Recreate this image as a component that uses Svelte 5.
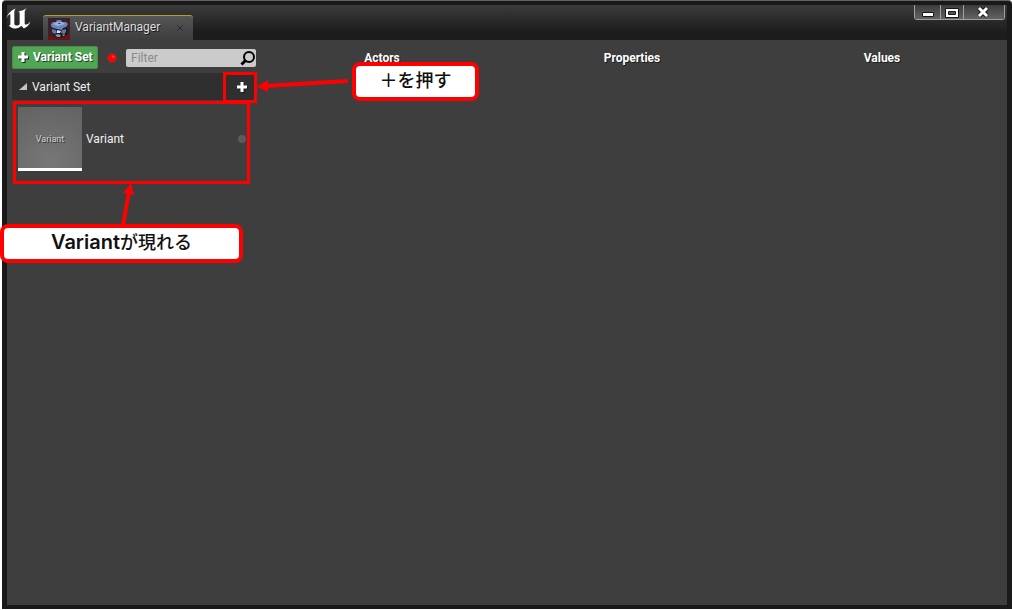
<script>
    let filter = '';
    let expanded = true;

    const columns = ['Actors', 'Properties', 'Values'];
    let variants = ['Variant'];

    function addVariant() {
        variants = [...variants, `Variant ${variants.length}`];
        expanded = true;
    }
</script>

<div class="window">
    <header class="titlebar">
        <svg class="logo" width="24" height="21" viewBox="1 0 22 19" aria-hidden="true">
            <path
                fill="#fff"
                d="M.3 9.500C1.800 4.800 5 1.600 9 .3C7.900 1.500 7.700 2.600 7.700 4V14C7.700 15.400 9.300 16.300 10.500 15.900C11.500 15.600 12.200 15.200 12.600 14.700V4.500C12.600 3.500 12 3.300 11 3.200C13.500 2.800 16.500 1.800 19 .2C18 1.400 17.200 2.400 17.200 3.700V13.700C17.200 15 18.100 15.500 19 15.100C20.300 14.600 21.300 13.800 22.500 12.300C21.500 15.300 19.300 17.400 16.500 18.600L14.200 16.200C12.500 17.800 10.500 18.900 8 18.700C5.800 18.500 3.700 17 2.600 15.600C3.500 15.800 4.100 15.500 4.100 14.500V6.500C4.100 5.300 3.500 5.300 2.900 5.900C1.900 6.900 1 8.200 .3 9.500Z"
            />
        </svg>
        <div class="tab">
            <svg class="tab-icon" width="22" height="22" viewBox="0 0 22 22" aria-hidden="true">
                <rect width="22" height="22" fill="#3a2224" />
                <path d="M0 22V18L22 16V22Z" fill="#651419" />
                <path d="M4 11L5 17L9 20L15 19L19 17L20 11L16 8H6Z" fill="#15171d" />
                <path d="M3 6L5 4L8 4L9 2L13 2L14 4L18 4L20 6L18 9L15 10L14 12L9 11L5 10L3 8Z" fill="#6985c0" />
                <path d="M5 6L9 4L14 4L17 6L13 7L10 8L7 7Z" fill="#9bb2de" />
                <path d="M10 5L13 5L12 6H10Z" fill="#34466d" />
                <path d="M4 11L8 12L9 15L6 16L4 14Z" fill="#5d75a9" />
                <path d="M14 12L18 11V14L16 16L13 15Z" fill="#61769f" />
                <path d="M9 12L13 13L12 15H9Z" fill="#e2e6ea" />
                <path d="M7 17L10 16L13 17L12 19L9 19Z" fill="#8a8f9c" />
                <path d="M14 17L17 16L16 18Z" fill="#b4b8c0" />
            </svg>
            <span class="tab-title">VariantManager</span>
            <button class="tab-close" aria-label="Close tab">
                <svg width="8" height="8" viewBox="0 0 8 8"><path d="M1 1L7 7M7 1L1 7" stroke="#2a2a2a" /></svg>
            </button>
        </div>
        <div class="controls">
            <button aria-label="Minimize">
                <svg width="14" height="12" viewBox="0 0 14 12"><path d="M1.500 6.500H12.500V10.500H1.500Z" fill="#fff" stroke="#181818" /></svg>
            </button>
            <button aria-label="Maximize">
                <svg width="14" height="12" viewBox="0 0 14 12">
                    <path d="M.5 2.500H13.500V11.500H.5Z" fill="#fff" stroke="#181818" />
                    <path d="M3.500 5.500H10.500V8.500H3.500Z" fill="#555" stroke="#181818" />
                </svg>
            </button>
            <button class="close" aria-label="Close">
                <svg width="14" height="12" viewBox="0 0 14 12">
                    <path d="M3 2L11 10M11 2L3 10" stroke="#181818" stroke-width="5" />
                    <path d="M3 2L11 10M11 2L3 10" stroke="#fff" stroke-width="3" />
                </svg>
            </button>
        </div>
    </header>

    <main class="content">
        <section class="sets">
            <div class="toolbar">
                <button class="add-set">
                    <svg width="12" height="12" viewBox="0 0 12 12"><path d="M6 1V11M1 6H11" stroke="#fff" stroke-width="3" /></svg>
                    Variant Set
                </button>
                <span class="record"></span>
                <label class="search">
                    <input type="text" placeholder="Filter" aria-label="Filter" bind:value={filter} />
                    <svg width="16" height="16" viewBox="0 0 16 16" aria-hidden="true">
                        <circle cx="9" cy="7" r="5" fill="none" stroke="#000" stroke-width="2" />
                        <path d="M6 10L1.500 14.500" stroke="#000" stroke-width="3" />
                    </svg>
                </label>
            </div>

            <div class="set-row">
                <button class="expander" on:click={() => (expanded = !expanded)}>
                    <svg width="8" height="8" viewBox="0 0 8 8"><path d="M8 0V7H0Z" fill="#c4c4c4" /></svg>
                    Variant Set
                </button>
                <button class="add" aria-label="Add variant" on:click={addVariant}>
                    <svg width="12" height="12" viewBox="0 0 12 12"><path d="M6 1V11M1 6H11" stroke="#fff" stroke-width="3" /></svg>
                </button>
            </div>

            {#if expanded}
                <ul class="variants">
                    {#each variants.filter((v) => v.toLowerCase().includes(filter.toLowerCase())) as variant}
                        <li>
                            <span class="thumb">{variant}</span>
                            <span class="name">{variant}</span>
                            <span class="dot"></span>
                        </li>
                    {/each}
                </ul>
            {/if}
        </section>

        {#each columns as column}
            <section class="column"><h2>{column}</h2></section>
        {/each}
    </main>
</div>

<!-- tutorial notes drawn over the window -->
<svg class="notes" width="480" height="270" viewBox="0 0 480 270" aria-hidden="true">
    <g fill="none" stroke="#f00" stroke-width="3">
        <rect x="224.500" y="73.500" width="31" height="28" />
        <rect x="14.500" y="102.500" width="234" height="80" />
    </g>
    <path d="M348 81L266 86M123 225L129 192" stroke="#f00" stroke-width="4" />
    <path d="M257 86.500L268 80V92ZM131 183L134 195L123 193Z" fill="#f00" />
</svg>
<div class="callout press">＋を押す</div>
<div class="callout appears"><span class="latin">Variant</span>が現れる</div>

<style>
    :global(body) {
        background: #fff;
        font-family: Roboto, "Noto Sans CJK JP", sans-serif;
        font-size: 12px;
        line-height: 16px;
        color: #f0f0f0;
    }

    button {
        padding: 0;
        border: 0;
        background: none;
        color: inherit;
        font: inherit;
    }

    svg {
        display: block;
        flex: none;
    }

    .window {
        display: flex;
        flex-direction: column;
        box-sizing: border-box;
        min-height: calc(100vh - 1px);
        margin-left: 2px;
        padding: 0 5px 4px;
        border-top: 1px solid #656560;
        border-radius: 4px 4px 0 0;
        background: #191919;
    }

    .titlebar {
        display: flex;
        align-items: flex-end;
        height: 35px;
        margin-top: 4px;
        background: linear-gradient(#3b3b3b, #1c1c1c 80%);
    }

    .logo {
        align-self: flex-start;
        margin-top: 3px;
        overflow: visible;
    }

    .tab {
        display: flex;
        align-items: center;
        width: 150px;
        height: 25px;
        margin-left: 12px;
        box-sizing: border-box;
        padding: 0 9px 0 5px;
        border-top: 1px solid #b69a35;
        border-radius: 3px 3px 0 0;
        background: linear-gradient(#555, #3e3e3e);
    }

    .tab-icon {
        margin-top: 2px;
    }

    .tab-title {
        margin-left: 5px;
        padding-bottom: 2px;
        color: #ddd;
        text-shadow: 1px 1px #1c1c1c;
    }

    .tab-close {
        margin-left: auto;
    }

    .controls {
        display: flex;
        align-self: flex-start;
        margin: 0 2px 0 auto;
        border: 1px solid #a0a0a0;
        border-top: 0;
        border-radius: 0 0 3px 3px;
    }

    .controls button {
        display: flex;
        align-items: center;
        justify-content: center;
        width: 25px;
        height: 14px;
        background: linear-gradient(#3c3c3c, #636363);
    }

    .controls button + button {
        width: 23px;
        border-left: 1px solid #a0a0a0;
    }

    .controls button.close {
        width: 41px;
        padding-right: 3px;
    }

    .content {
        display: grid;
        grid-template-columns: repeat(4, minmax(0, 1fr));
        flex: 1;
        background: #3e3e3e;
    }

    .sets {
        padding: 6px 0 0 5px;
    }

    .toolbar {
        display: flex;
        align-items: center;
        height: 23px;
    }

    .add-set {
        display: flex;
        align-items: center;
        flex: none;
        gap: 4px;
        box-sizing: border-box;
        width: 86px;
        height: 23px;
        padding: 0 0 2px 4px;
        border: 1px solid #458d49;
        border-radius: 2px;
        background: #50a655;
        color: #fff;
        font-weight: 700;
        text-shadow: 1px 1px #1d4420;
        white-space: nowrap;
    }

    .add-set svg,
    .add svg {
        filter: drop-shadow(1px 1px 0 #1a1a1a);
    }

    .record {
        flex: none;
        box-sizing: border-box;
        width: 10px;
        height: 10px;
        margin: 1px 9px 0;
        border: 1px solid #8a3030;
        border-radius: 50%;
        background: radial-gradient(circle at 65% 35%, #ff6060, #f00 25%);
    }

    .search {
        display: flex;
        align-items: center;
        flex: 1;
        min-width: 0;
        height: 18px;
        margin-right: 1px;
        border-radius: 2px;
        background: #cbcbcb;
    }

    .search input {
        flex: 1;
        min-width: 0;
        padding: 0 5px;
        border: 0;
        outline: 0;
        background: none;
        font: inherit;
    }

    .search input::placeholder {
        color: #8a8a8a;
    }

    .set-row {
        display: flex;
        height: 27px;
        margin-top: 4px;
        background: #2f2f2f;
    }

    .expander {
        display: flex;
        align-items: center;
        flex: 1;
        gap: 5px;
        padding-left: 7px;
    }

    .add {
        display: flex;
        align-items: center;
        justify-content: center;
        width: 30px;
    }

    .variants {
        margin: 0;
        padding: 7px 11px 0 6px;
        list-style: none;
    }

    .variants li {
        display: flex;
        align-items: center;
        gap: 4px;
        margin-bottom: 8px;
    }

    .thumb {
        box-sizing: border-box;
        width: 64px;
        height: 64px;
        padding-top: 24px;
        border-bottom: 3px solid #fff;
        background: radial-gradient(circle at 50% 90%, #777, #626262);
        color: #d0d0d0;
        font-size: 9px;
        text-align: center;
        text-shadow: 1px 1px #333;
    }

    .dot {
        width: 8px;
        height: 8px;
        margin-left: auto;
        border-radius: 50%;
        background: #5e5a59;
    }

    .column h2 {
        margin: 10px 0 0;
        color: #fff;
        font-size: 12px;
        line-height: 16px;
        text-align: center;
        text-shadow: 1px 1px #1c1c1c;
    }

    .notes {
        position: absolute;
        top: 0;
        left: 0;
        pointer-events: none;
    }

    .callout {
        position: absolute;
        box-sizing: border-box;
        height: 39px;
        border: 4px solid #f00;
        border-radius: 8px;
        background: #fff;
        color: #111;
        font-family: "Noto Sans CJK JP", sans-serif;
        font-size: 18px;
        font-weight: 500;
        line-height: 26px;
        text-align: center;
    }

    .latin {
        font-family: Inter, sans-serif;
        font-size: 20px;
        font-weight: 600;
    }

    .press {
        top: 62px;
        left: 352px;
        width: 127px;
    }

    .appears {
        top: 224px;
        left: 0;
        width: 243px;
    }
</style>
